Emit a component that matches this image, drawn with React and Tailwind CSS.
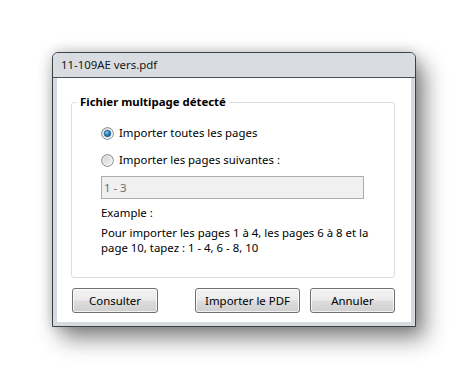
import React from "react"

const Radio = ({ checked }) => (
    <svg width="13" height="13" viewBox="0 0 13 13" className="shrink-0">
        <defs>
            <linearGradient id={checked ? "rbgOn" : "rbgOff"} x1="0" y1="0" x2="1" y2="1">
                <stop offset="0" stopColor="#c9cbce" />
                <stop offset="1" stopColor="#fbfbfb" />
            </linearGradient>
            <radialGradient id="rdot" cx="0.4" cy="0.35" r="0.7">
                <stop offset="0" stopColor="#8fd3fb" />
                <stop offset="0.45" stopColor="#2d8ccc" />
                <stop offset="1" stopColor="#154f7d" />
            </radialGradient>
        </defs>
        <circle cx="6.5" cy="6.5" r="5.9" fill={checked ? "url(#rbgOn)" : "url(#rbgOff)"} stroke="#8d8e90" strokeWidth="1" />
        <circle cx="6.5" cy="6.5" r="4.4" fill="none" stroke="#f4f4f4" strokeWidth="0.8" />
        {checked && <circle cx="6.5" cy="6.5" r="3.3" fill="url(#rdot)" stroke="#1c4e78" strokeWidth="0.6" />}
    </svg>
)

const Button = ({ className, children }) => (
    <button className={`h-[25px] rounded-[3px] border border-[#707070] bg-[linear-gradient(#f2f2f2,#ebebeb_48%,#dddddd_52%,#cfcfcf)] text-[11.4px] text-black shadow-[inset_0_0_0_1px_rgba(255,255,255,0.7)] ${className}`}>
        {children}
    </button>
)

const App = () => {
    return (
        <div className="h-[379px] w-[468px] bg-white pl-[52px] pt-[52px] font-['Noto_Sans',sans-serif] text-[11.4px] text-black">
            <div className="flex h-[275px] w-[364px] flex-col rounded-t-[6px] border border-[#3c4147] bg-[#d6dade] shadow-[0_0_14px_rgba(0,0,0,0.22),9px_12px_22px_rgba(0,0,0,0.45)]">
                <div className="flex h-[25px] shrink-0 items-center rounded-t-[5px] border-b border-[#4b5158] bg-[#d9dde2] pl-[8px] text-[11.4px] text-[#161616]">
                    11-109AE vers.pdf
                </div>

                <div className="flex-1 px-[4px] pb-[4px]">
                    <div className="flex h-full flex-col bg-white">
                        <fieldset className="ml-[14px] mt-[16px] h-[184px] w-[324px] rounded-[3px] border border-[#d5dfe5] p-0">
                            <legend className="ml-[5px] px-[3px] text-[11.4px] font-bold leading-[16px]">Fichier multipage détecté</legend>

                            <div className="flex flex-col pl-[29px] pt-[15px]">
                                <label className="flex h-[16px] items-center gap-[5px] leading-[16px]">
                                    <Radio checked />
                                    <span>Importer toutes les pages</span>
                                </label>
                                <label className="mt-[11px] flex h-[16px] items-center gap-[5px] leading-[16px]">
                                    <Radio />
                                    <span>Importer les pages suivantes :</span>
                                </label>

                                <div className="mt-[8px] flex h-[23px] w-[263px] items-center border border-[#abadb3] bg-[#f0f0f0] pl-[2px] text-[#6d6d6d]">
                                    1 - 3
                                </div>

                                <p className="mt-[6px] leading-[16px]">Example :</p>
                                <p className="mt-[4px] w-[275px] leading-[15px]">
                                    Pour importer les pages 1 à 4, les pages 6 à 8 et la page 10, tapez : 1 - 4, 6 - 8, 10
                                </p>
                            </div>
                        </fieldset>

                        <div className="ml-[15px] mt-[10px] flex w-[323px]">
                            <Button className="w-[86px]">Consulter</Button>
                            <Button className="ml-auto w-[105px]">Importer le PDF</Button>
                            <Button className="ml-[10px] w-[85px]">Annuler</Button>
                        </div>
                    </div>
                </div>
            </div>
        </div>
    )
}

export default App
